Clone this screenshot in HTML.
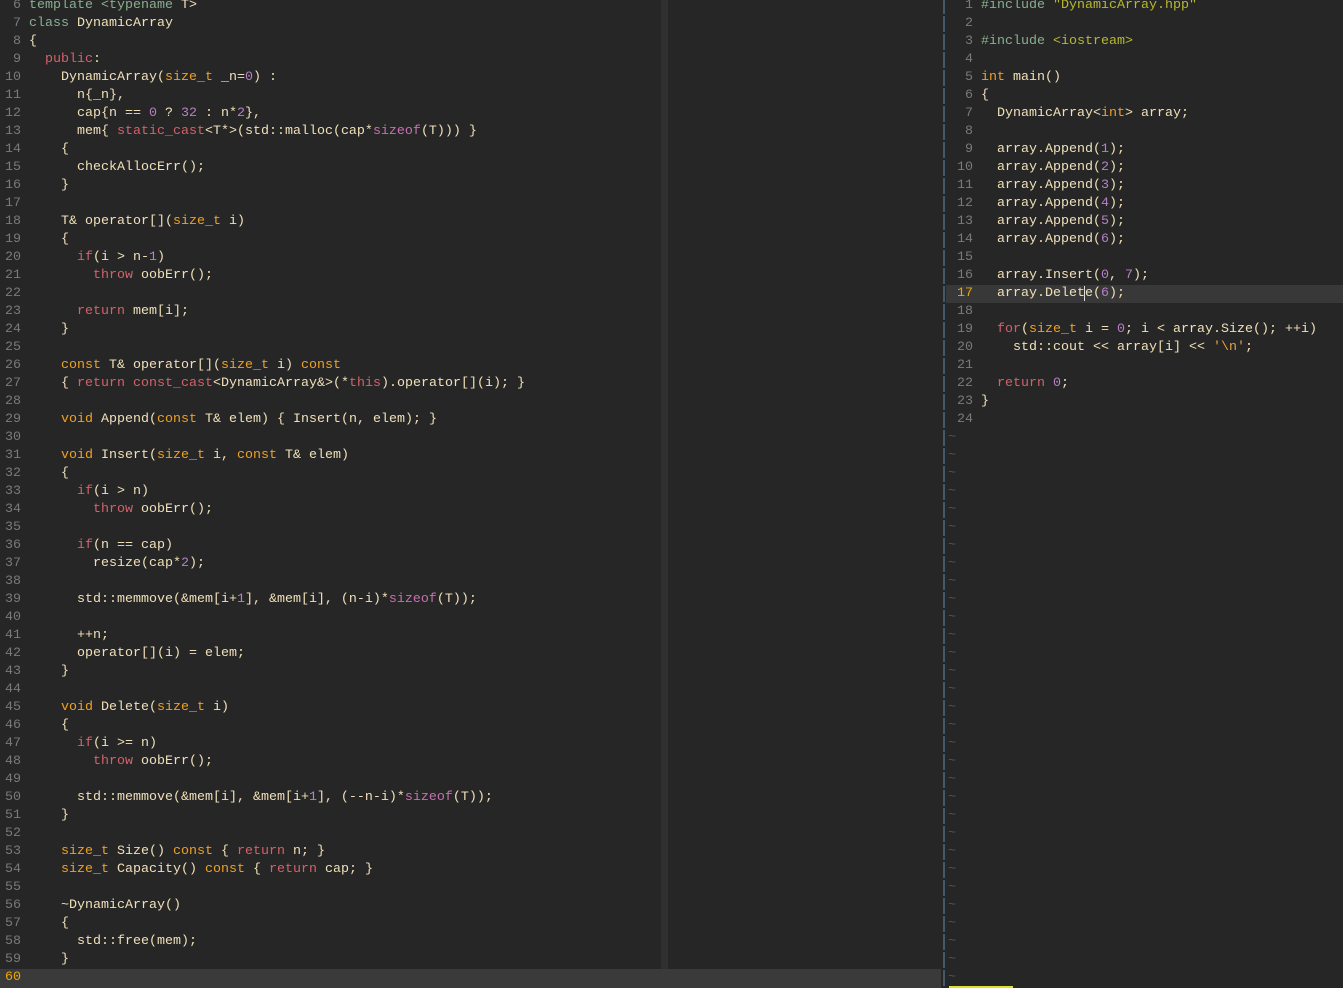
<!DOCTYPE html>
<html><head><meta charset="utf-8">
<style>
html,body{margin:0;padding:0;width:1343px;height:988px;overflow:hidden;background:#262626;}
.pane{position:absolute;top:-3px;font-family:"Liberation Mono",monospace;font-size:13.34px;line-height:18px;color:#f0e0b8;}
.row{height:18px;position:relative;white-space:pre;overflow:visible;}
.ln{position:absolute;left:0;top:0;text-align:right;color:#7a7a7a;}
.k{color:#d6606a}.t{color:#f0a020}.n{color:#b880c8}.g{color:#88b090}.s{color:#b8b830}.p{color:#c870b0}.o{color:#e6a040}
.sep{position:absolute;left:0;top:1px;height:16px;width:2px;background:#45586a;}
.tl{color:#555;}
</style></head><body>
<div style="position:absolute;left:661px;top:0;width:7px;height:969px;background:#303030"></div>
<div style="position:absolute;left:0;top:969px;width:941px;height:19px;background:#3a3a3a"></div>
<div style="position:absolute;left:946px;top:285px;width:397px;height:18px;background:#383838"></div>
<div style="position:absolute;left:949px;top:986px;width:64px;height:2px;background:#e0e030"></div>

<div class="pane" style="left:0;width:660px">
<div class="row"><span class="ln" style="width:21px"> 6</span><span style="padding-left:29px"><span class="g">template &lt;typename </span>T&gt;</span></div>
<div class="row"><span class="ln" style="width:21px"> 7</span><span style="padding-left:29px"><span class="g">class </span>DynamicArray</span></div>
<div class="row"><span class="ln" style="width:21px"> 8</span><span style="padding-left:29px">{</span></div>
<div class="row"><span class="ln" style="width:21px"> 9</span><span style="padding-left:29px">  <span class="k">public</span>:</span></div>
<div class="row"><span class="ln" style="width:21px">10</span><span style="padding-left:29px">    DynamicArray(<span class="t">size_t</span> _n=<span class="n">0</span>) :</span></div>
<div class="row"><span class="ln" style="width:21px">11</span><span style="padding-left:29px">      n{_n},</span></div>
<div class="row"><span class="ln" style="width:21px">12</span><span style="padding-left:29px">      cap{n == <span class="n">0</span> ? <span class="n">32</span> : n*<span class="n">2</span>},</span></div>
<div class="row"><span class="ln" style="width:21px">13</span><span style="padding-left:29px">      mem{ <span class="k">static_cast</span>&lt;T*&gt;(std::malloc(cap*<span class="p">sizeof</span>(T))) }</span></div>
<div class="row"><span class="ln" style="width:21px">14</span><span style="padding-left:29px">    {</span></div>
<div class="row"><span class="ln" style="width:21px">15</span><span style="padding-left:29px">      checkAllocErr();</span></div>
<div class="row"><span class="ln" style="width:21px">16</span><span style="padding-left:29px">    }</span></div>
<div class="row"><span class="ln" style="width:21px">17</span></div>
<div class="row"><span class="ln" style="width:21px">18</span><span style="padding-left:29px">    T&amp; operator[](<span class="t">size_t</span> i)</span></div>
<div class="row"><span class="ln" style="width:21px">19</span><span style="padding-left:29px">    {</span></div>
<div class="row"><span class="ln" style="width:21px">20</span><span style="padding-left:29px">      <span class="k">if</span>(i &gt; n-<span class="n">1</span>)</span></div>
<div class="row"><span class="ln" style="width:21px">21</span><span style="padding-left:29px">        <span class="k">throw</span> oobErr();</span></div>
<div class="row"><span class="ln" style="width:21px">22</span></div>
<div class="row"><span class="ln" style="width:21px">23</span><span style="padding-left:29px">      <span class="k">return</span> mem[i];</span></div>
<div class="row"><span class="ln" style="width:21px">24</span><span style="padding-left:29px">    }</span></div>
<div class="row"><span class="ln" style="width:21px">25</span></div>
<div class="row"><span class="ln" style="width:21px">26</span><span style="padding-left:29px">    <span class="t">const</span> T&amp; operator[](<span class="t">size_t</span> i) <span class="t">const</span></span></div>
<div class="row"><span class="ln" style="width:21px">27</span><span style="padding-left:29px">    { <span class="k">return const_cast</span>&lt;DynamicArray&amp;&gt;(*<span class="k">this</span>).operator[](i); }</span></div>
<div class="row"><span class="ln" style="width:21px">28</span></div>
<div class="row"><span class="ln" style="width:21px">29</span><span style="padding-left:29px">    <span class="t">void</span> Append(<span class="t">const</span> T&amp; elem) { Insert(n, elem); }</span></div>
<div class="row"><span class="ln" style="width:21px">30</span></div>
<div class="row"><span class="ln" style="width:21px">31</span><span style="padding-left:29px">    <span class="t">void</span> Insert(<span class="t">size_t</span> i, <span class="t">const</span> T&amp; elem)</span></div>
<div class="row"><span class="ln" style="width:21px">32</span><span style="padding-left:29px">    {</span></div>
<div class="row"><span class="ln" style="width:21px">33</span><span style="padding-left:29px">      <span class="k">if</span>(i &gt; n)</span></div>
<div class="row"><span class="ln" style="width:21px">34</span><span style="padding-left:29px">        <span class="k">throw</span> oobErr();</span></div>
<div class="row"><span class="ln" style="width:21px">35</span></div>
<div class="row"><span class="ln" style="width:21px">36</span><span style="padding-left:29px">      <span class="k">if</span>(n == cap)</span></div>
<div class="row"><span class="ln" style="width:21px">37</span><span style="padding-left:29px">        resize(cap*<span class="n">2</span>);</span></div>
<div class="row"><span class="ln" style="width:21px">38</span></div>
<div class="row"><span class="ln" style="width:21px">39</span><span style="padding-left:29px">      std::memmove(&amp;mem[i+<span class="n">1</span>], &amp;mem[i], (n-i)*<span class="p">sizeof</span>(T));</span></div>
<div class="row"><span class="ln" style="width:21px">40</span></div>
<div class="row"><span class="ln" style="width:21px">41</span><span style="padding-left:29px">      ++n;</span></div>
<div class="row"><span class="ln" style="width:21px">42</span><span style="padding-left:29px">      operator[](i) = elem;</span></div>
<div class="row"><span class="ln" style="width:21px">43</span><span style="padding-left:29px">    }</span></div>
<div class="row"><span class="ln" style="width:21px">44</span></div>
<div class="row"><span class="ln" style="width:21px">45</span><span style="padding-left:29px">    <span class="t">void</span> Delete(<span class="t">size_t</span> i)</span></div>
<div class="row"><span class="ln" style="width:21px">46</span><span style="padding-left:29px">    {</span></div>
<div class="row"><span class="ln" style="width:21px">47</span><span style="padding-left:29px">      <span class="k">if</span>(i &gt;= n)</span></div>
<div class="row"><span class="ln" style="width:21px">48</span><span style="padding-left:29px">        <span class="k">throw</span> oobErr();</span></div>
<div class="row"><span class="ln" style="width:21px">49</span></div>
<div class="row"><span class="ln" style="width:21px">50</span><span style="padding-left:29px">      std::memmove(&amp;mem[i], &amp;mem[i+<span class="n">1</span>], (--n-i)*<span class="p">sizeof</span>(T));</span></div>
<div class="row"><span class="ln" style="width:21px">51</span><span style="padding-left:29px">    }</span></div>
<div class="row"><span class="ln" style="width:21px">52</span></div>
<div class="row"><span class="ln" style="width:21px">53</span><span style="padding-left:29px">    <span class="t">size_t</span> Size() <span class="t">const</span> { <span class="k">return</span> n; }</span></div>
<div class="row"><span class="ln" style="width:21px">54</span><span style="padding-left:29px">    <span class="t">size_t</span> Capacity() <span class="t">const</span> { <span class="k">return</span> cap; }</span></div>
<div class="row"><span class="ln" style="width:21px">55</span></div>
<div class="row"><span class="ln" style="width:21px">56</span><span style="padding-left:29px">    ~DynamicArray()</span></div>
<div class="row"><span class="ln" style="width:21px">57</span><span style="padding-left:29px">    {</span></div>
<div class="row"><span class="ln" style="width:21px">58</span><span style="padding-left:29px">      std::free(mem);</span></div>
<div class="row"><span class="ln" style="width:21px">59</span><span style="padding-left:29px">    }</span></div>
<div class="row"><span class="ln" style="width:21px;color:#f0a800">60</span></div>
</div>

<div class="pane" style="left:943px;width:400px">
<div class="row"><i class="sep"></i><span class="ln" style="width:30px"> 1</span><span style="padding-left:38px"><span class="g">#include </span><span class="s">"DynamicArray.hpp"</span></span></div>
<div class="row"><i class="sep"></i><span class="ln" style="width:30px"> 2</span></div>
<div class="row"><i class="sep"></i><span class="ln" style="width:30px"> 3</span><span style="padding-left:38px"><span class="g">#include </span><span class="s">&lt;iostream&gt;</span></span></div>
<div class="row"><i class="sep"></i><span class="ln" style="width:30px"> 4</span></div>
<div class="row"><i class="sep"></i><span class="ln" style="width:30px"> 5</span><span style="padding-left:38px"><span class="t">int</span> main()</span></div>
<div class="row"><i class="sep"></i><span class="ln" style="width:30px"> 6</span><span style="padding-left:38px">{</span></div>
<div class="row"><i class="sep"></i><span class="ln" style="width:30px"> 7</span><span style="padding-left:38px">  DynamicArray&lt;<span class="t">int</span>&gt; array;</span></div>
<div class="row"><i class="sep"></i><span class="ln" style="width:30px"> 8</span></div>
<div class="row"><i class="sep"></i><span class="ln" style="width:30px"> 9</span><span style="padding-left:38px">  array.Append(<span class="n">1</span>);</span></div>
<div class="row"><i class="sep"></i><span class="ln" style="width:30px">10</span><span style="padding-left:38px">  array.Append(<span class="n">2</span>);</span></div>
<div class="row"><i class="sep"></i><span class="ln" style="width:30px">11</span><span style="padding-left:38px">  array.Append(<span class="n">3</span>);</span></div>
<div class="row"><i class="sep"></i><span class="ln" style="width:30px">12</span><span style="padding-left:38px">  array.Append(<span class="n">4</span>);</span></div>
<div class="row"><i class="sep"></i><span class="ln" style="width:30px">13</span><span style="padding-left:38px">  array.Append(<span class="n">5</span>);</span></div>
<div class="row"><i class="sep"></i><span class="ln" style="width:30px">14</span><span style="padding-left:38px">  array.Append(<span class="n">6</span>);</span></div>
<div class="row"><i class="sep"></i><span class="ln" style="width:30px">15</span></div>
<div class="row"><i class="sep"></i><span class="ln" style="width:30px">16</span><span style="padding-left:38px">  array.Insert(<span class="n">0</span>, <span class="n">7</span>);</span></div>
<div class="row"><i class="sep"></i><span class="ln" style="width:30px;color:#f0a800">17</span><span style="padding-left:38px">  array.Delet<span style="border-left:1px solid #ddd;margin-left:-1px">e</span>(<span class="n">6</span>);</span></div>
<div class="row"><i class="sep"></i><span class="ln" style="width:30px">18</span></div>
<div class="row"><i class="sep"></i><span class="ln" style="width:30px">19</span><span style="padding-left:38px">  <span class="k">for</span>(<span class="t">size_t</span> i = <span class="n">0</span>; i &lt; array.Size(); ++i)</span></div>
<div class="row"><i class="sep"></i><span class="ln" style="width:30px">20</span><span style="padding-left:38px">    std::cout &lt;&lt; array[i] &lt;&lt; <span class="o">'\n'</span>;</span></div>
<div class="row"><i class="sep"></i><span class="ln" style="width:30px">21</span></div>
<div class="row"><i class="sep"></i><span class="ln" style="width:30px">22</span><span style="padding-left:38px">  <span class="k">return</span> <span class="n">0</span>;</span></div>
<div class="row"><i class="sep"></i><span class="ln" style="width:30px">23</span><span style="padding-left:38px">}</span></div>
<div class="row"><i class="sep"></i><span class="ln" style="width:30px">24</span></div>
<div class="row"><i class="sep"></i><span class="tl" style="padding-left:5px">~</span></div>
<div class="row"><i class="sep"></i><span class="tl" style="padding-left:5px">~</span></div>
<div class="row"><i class="sep"></i><span class="tl" style="padding-left:5px">~</span></div>
<div class="row"><i class="sep"></i><span class="tl" style="padding-left:5px">~</span></div>
<div class="row"><i class="sep"></i><span class="tl" style="padding-left:5px">~</span></div>
<div class="row"><i class="sep"></i><span class="tl" style="padding-left:5px">~</span></div>
<div class="row"><i class="sep"></i><span class="tl" style="padding-left:5px">~</span></div>
<div class="row"><i class="sep"></i><span class="tl" style="padding-left:5px">~</span></div>
<div class="row"><i class="sep"></i><span class="tl" style="padding-left:5px">~</span></div>
<div class="row"><i class="sep"></i><span class="tl" style="padding-left:5px">~</span></div>
<div class="row"><i class="sep"></i><span class="tl" style="padding-left:5px">~</span></div>
<div class="row"><i class="sep"></i><span class="tl" style="padding-left:5px">~</span></div>
<div class="row"><i class="sep"></i><span class="tl" style="padding-left:5px">~</span></div>
<div class="row"><i class="sep"></i><span class="tl" style="padding-left:5px">~</span></div>
<div class="row"><i class="sep"></i><span class="tl" style="padding-left:5px">~</span></div>
<div class="row"><i class="sep"></i><span class="tl" style="padding-left:5px">~</span></div>
<div class="row"><i class="sep"></i><span class="tl" style="padding-left:5px">~</span></div>
<div class="row"><i class="sep"></i><span class="tl" style="padding-left:5px">~</span></div>
<div class="row"><i class="sep"></i><span class="tl" style="padding-left:5px">~</span></div>
<div class="row"><i class="sep"></i><span class="tl" style="padding-left:5px">~</span></div>
<div class="row"><i class="sep"></i><span class="tl" style="padding-left:5px">~</span></div>
<div class="row"><i class="sep"></i><span class="tl" style="padding-left:5px">~</span></div>
<div class="row"><i class="sep"></i><span class="tl" style="padding-left:5px">~</span></div>
<div class="row"><i class="sep"></i><span class="tl" style="padding-left:5px">~</span></div>
<div class="row"><i class="sep"></i><span class="tl" style="padding-left:5px">~</span></div>
<div class="row"><i class="sep"></i><span class="tl" style="padding-left:5px">~</span></div>
<div class="row"><i class="sep"></i><span class="tl" style="padding-left:5px">~</span></div>
<div class="row"><i class="sep"></i><span class="tl" style="padding-left:5px">~</span></div>
<div class="row"><i class="sep"></i><span class="tl" style="padding-left:5px">~</span></div>
<div class="row"><i class="sep"></i><span class="tl" style="padding-left:5px">~</span></div>
<div class="row"><i class="sep"></i><span class="tl" style="padding-left:5px">~</span></div>
</div>
</body></html>
